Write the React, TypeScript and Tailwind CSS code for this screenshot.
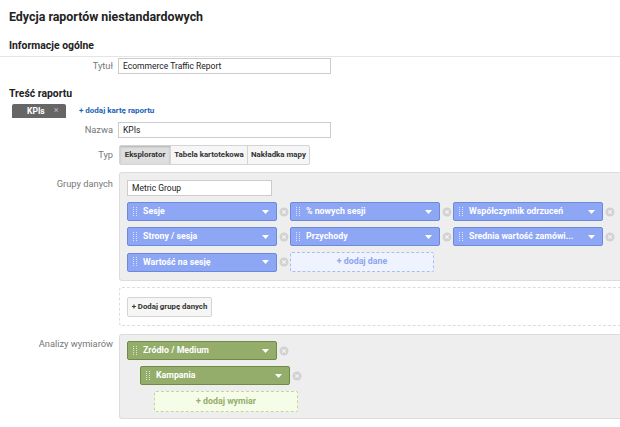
import React from "react";

const Grip = () => (
  <svg width="4" height="10" viewBox="0 0 4 10" className="shrink-0">
    {[0, 2, 4, 6, 8].map((y) => (
      <g key={y} fill="rgba(255,255,255,0.7)">
        <rect x="0" y={y} width="1" height="1" />
        <rect x="3" y={y} width="1" height="1" />
      </g>
    ))}
  </svg>
);

const Caret = () => (
  <svg width="7" height="4" viewBox="0 0 7 4" className="shrink-0">
    <path d="M0 0 L7 0 L3.5 4 Z" fill="white" />
  </svg>
);

const XCircle = () => (
  <svg width="10" height="10" viewBox="0 0 10 10" className="shrink-0">
    <circle cx="5" cy="5" r="4.5" fill="#d2d2d2" />
    <path d="M3.3 3.3 L6.7 6.7 M6.7 3.3 L3.3 6.7" stroke="#f4f4f4" strokeWidth="1.2" />
  </svg>
);

const Chip = ({ label, color }: { label: string; color: "blue" | "green" }) => (
  <div className="flex items-center">
    <div
      className={
        color === "blue"
          ? "w-[150px] h-[19px] flex items-center pl-[5px] pr-[7px] rounded-[2px] border border-[#6d89de] bg-[#8ea7f4] text-white font-bold text-[8.8px]"
          : "w-[150px] h-[19px] flex items-center pl-[5px] pr-[7px] rounded-[2px] border border-[#6f8b47] bg-[#94ad6b] text-white font-bold text-[8.8px]"
      }
    >
      <Grip />
      <span className="ml-[6px] flex-1 truncate leading-none">{label}</span>
      <Caret />
    </div>
    <div className="w-[13px] flex justify-center">
      <XCircle />
    </div>
  </div>
);

export default function App() {
  return (
    <div
      className="w-[620px] h-[427px] overflow-hidden bg-white text-[#333]"
      style={{ fontFamily: "Roboto, 'Liberation Sans', Arial, sans-serif" }}
    >
      <div className="pl-[9px] pt-[9px] h-[34px]">
        <h1 className="text-[12.4px] font-bold text-[#222] leading-[16px]">Edycja raportów niestandardowych</h1>
      </div>

      <div className="pl-[9px] h-[22px] pb-[4px] flex items-end">
        <h2 className="text-[10.4px] font-bold text-[#222] leading-[13px]">Informacje ogólne</h2>
      </div>
      <div className="border-t border-[#e5e5e5] pt-[1px] grid grid-cols-[113px_1fr] gap-x-[5px] items-center">
        <div className="text-right text-[#777] text-[9.3px]">Tytuł</div>
        <div className="w-[213px] h-[16px] border border-[#ccc] px-[4px] flex items-center text-[8.5px] text-[#222]">
          Ecommerce Traffic Report
        </div>
      </div>

      <div className="pl-[9px] mt-[13px] h-[13px] flex items-center">
        <h2 className="text-[10.4px] font-bold text-[#222] leading-[13px]">Treść raportu</h2>
      </div>

      <div className="mt-[4px] pl-[12px] flex items-center h-[14px]">
        <div className="w-[54px] h-[14px] bg-[#666] rounded-t-[2px] flex items-center pl-[15px] text-white font-bold text-[8.5px]">
          <span>KPIs</span>
          <span className="ml-[9px] text-[#bbb] font-normal text-[9px]">×</span>
        </div>
        <span className="ml-[13px] text-[#1a62b8] font-bold text-[8px]">+ dodaj kartę raportu</span>
      </div>

      <div className="mt-[4px] grid grid-cols-[113px_1fr] gap-x-[5px] items-center">
        <div className="text-right text-[#777] text-[9.3px]">Nazwa</div>
        <div className="w-[213px] h-[16px] border border-[#ccc] px-[4px] flex items-center text-[8.5px] text-[#222]">
          KPIs
        </div>
      </div>

      <div className="mt-[7px] grid grid-cols-[113px_1fr] gap-x-[6px] items-center">
        <div className="text-right text-[#777] text-[9.3px]">Typ</div>
        <div className="flex h-[20px] w-fit border border-[#d4d4d4] rounded-[2px] bg-[#f6f6f6] text-[7.9px] font-bold text-[#333] overflow-hidden">
          <div className="w-[50px] flex items-center justify-center bg-[#dedede] shadow-[inset_0_1px_2px_rgba(0,0,0,0.2)]">Eksplorator</div>
          <div className="w-[77px] flex items-center justify-center border-l border-[#d4d4d4]">Tabela kartotekowa</div>
          <div className="w-[62px] flex items-center justify-center border-l border-[#d4d4d4]">Nakładka mapy</div>
        </div>
      </div>

      <div className="mt-[7px] grid grid-cols-[113px_1fr] gap-x-[6px]">
        <div className="text-right text-[#777] text-[9.3px] pt-[5px]">Grupy danych</div>
        <div>
          <div className="bg-[#eeeeee] border-t border-b border-l border-[#dcdcdc] rounded-l-[3px] pl-[7px] pt-[7px] h-[109px]">
            <div className="w-[145px] h-[16px] border border-[#ccc] bg-white px-[4px] flex items-center text-[8.5px] text-[#222]">
              Metric Group
            </div>
            <div className="mt-[6px] flex flex-col gap-[6px]">
              <div className="flex">
                <Chip label="Sesje" color="blue" />
                <Chip label="% nowych sesji" color="blue" />
                <Chip label="Współczynnik odrzuceń" color="blue" />
              </div>
              <div className="flex">
                <Chip label="Strony / sesja" color="blue" />
                <Chip label="Przychody" color="blue" />
                <Chip label="Średnia wartość zamówi..." color="blue" />
              </div>
              <div className="flex">
                <Chip label="Wartość na sesję" color="blue" />
                <div className="w-[144px] h-[20px] border border-dashed border-[#aebdf1] bg-[#eef3fe] rounded-[2px] flex items-center justify-center text-[#8ea5ee] font-bold text-[8.8px]">
                  + dodaj dane
                </div>
              </div>
            </div>
          </div>
          <div className="mt-[6px] h-[39px] border-t border-b border-l border-dashed border-[#dddddd] rounded-l-[3px] pl-[7px] flex items-center">
            <div className="h-[20px] w-[85px] border border-[#d4d4d4] bg-[#f6f6f6] rounded-[2px] flex items-center justify-center text-[7.8px] font-bold text-[#333]">
              + Dodaj grupę danych
            </div>
          </div>
        </div>
      </div>

      <div className="mt-[8px] grid grid-cols-[113px_1fr] gap-x-[6px]">
        <div className="text-right text-[#777] text-[9.3px] pt-[3px]">Analizy wymiarów</div>
        <div className="bg-[#eeeeee] border-t border-b border-l border-[#dcdcdc] rounded-l-[3px] pl-[7px] pt-[6px] h-[85px]">
          <Chip label="Źródło / Medium" color="green" />
          <div className="mt-[6px] ml-[13px]">
            <Chip label="Kampania" color="green" />
          </div>
          <div className="mt-[6px] ml-[27px] w-[144px] h-[21px] border border-dashed border-[#c3d79c] bg-[#f5fde8] rounded-[2px] flex items-center justify-center text-[#94ad6a] font-bold text-[8.8px]">
            + dodaj wymiar
          </div>
        </div>
      </div>
    </div>
  );
}
